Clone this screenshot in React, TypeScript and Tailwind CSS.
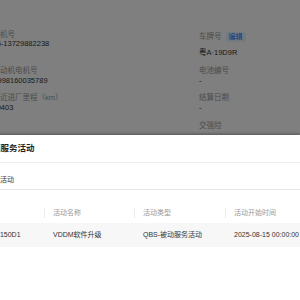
import React from 'react';

const details = [
  { label: '手机号', value: '86-13729882238', right: { label: '车牌号', value: '粤A·19D9R', edit: true } },
  { label: '发动机电机号', value: 'E998160035789', right: { label: '电池编号', value: '-' } },
  { label: '最近进厂里程（km）', value: '10403', right: { label: '结算日期', value: '-' } },
  { label: '', value: '', right: { label: '交强险', value: '-' } },
];

const columns = [
  { title: '活动编号', width: 'w-[99px]' },
  { title: '活动名称', width: 'w-[90px]' },
  { title: '活动类型', width: 'w-[91px]' },
  { title: '活动开始时间', width: 'w-[120px]' },
];

const rows = [['QBS20250815150D1', 'VDDM软件升级', 'QBS-被动服务活动', '2025-08-15 00:00:00']];

export default function App() {
  return (
    <div className="relative w-[300px] h-[300px] overflow-hidden bg-white font-['Liberation_Sans','Noto_Sans_CJK_SC',sans-serif]">
      {/* vehicle info page underneath */}
      <div className="-ml-[7.5px] pt-[30px] grid grid-cols-[206.5px_1fr] gap-y-[8.4px] text-[7.5px] leading-[9.4px] whitespace-nowrap">
        {details.map((d, i) => (
          <React.Fragment key={i}>
            <div>
              {d.label && <div className="text-[#999]">{d.label}</div>}
              {d.value && <div className="text-[#333]">{d.value}</div>}
            </div>
            <div>
              {d.right.edit ? (
                <div className="h-[14px] flex items-center gap-[4px]">
                  <span className="text-[#999]">{d.right.label}</span>
                  <span className="px-[3px] rounded-[2px] bg-[#e6f4ff] text-[#1677ff] text-[7px]">编辑</span>
                </div>
              ) : (
                <div className="text-[#999]">{d.right.label}</div>
              )}
              <div className={d.right.edit ? 'mt-[4.3px] text-[#333]' : 'text-[#333]'}>{d.right.value}</div>
            </div>
          </React.Fragment>
        ))}
      </div>

      {/* mask */}
      <div className="absolute inset-0 bg-black/50" />

      {/* service activity modal */}
      <div className="absolute top-[135px] left-[-54px] right-0 bottom-0 bg-white shadow-[0_-1px_3px_rgba(0,0,0,0.35)] whitespace-nowrap">
        <div className="h-[28px] flex items-center border-b border-[#f0f0f0] pl-[37.5px] text-[8.5px] font-bold text-[#1f1f1f]">
          车辆服务活动
        </div>
        <div className="h-[27px] flex items-end pb-[4px] border-b border-[#e8e8e8] pl-[40px] text-[7px] text-[#333]">
          服务活动
        </div>
        <div className="mt-[13px] text-[7px]">
          <div className="flex h-[20px] items-center text-[#999]">
            {columns.map((c, i) => (
              <div key={c.title} className={`${c.width} shrink-0 flex items-center justify-between`}>
                <span className="pl-[8px]">{c.title}</span>
                {i < columns.length - 1 && <span className="w-px h-[10px] bg-[#ebebeb]" />}
              </div>
            ))}
          </div>
          {rows.map((r, ri) => (
            <div key={ri} className="flex h-[24px] items-center bg-[#f7f7f7] text-[#333]">
              {r.map((cell, ci) => (
                <div key={ci} className={`${columns[ci].width} shrink-0 pl-[8px]`}>
                  {cell}
                </div>
              ))}
            </div>
          ))}
        </div>
      </div>
    </div>
  );
}
